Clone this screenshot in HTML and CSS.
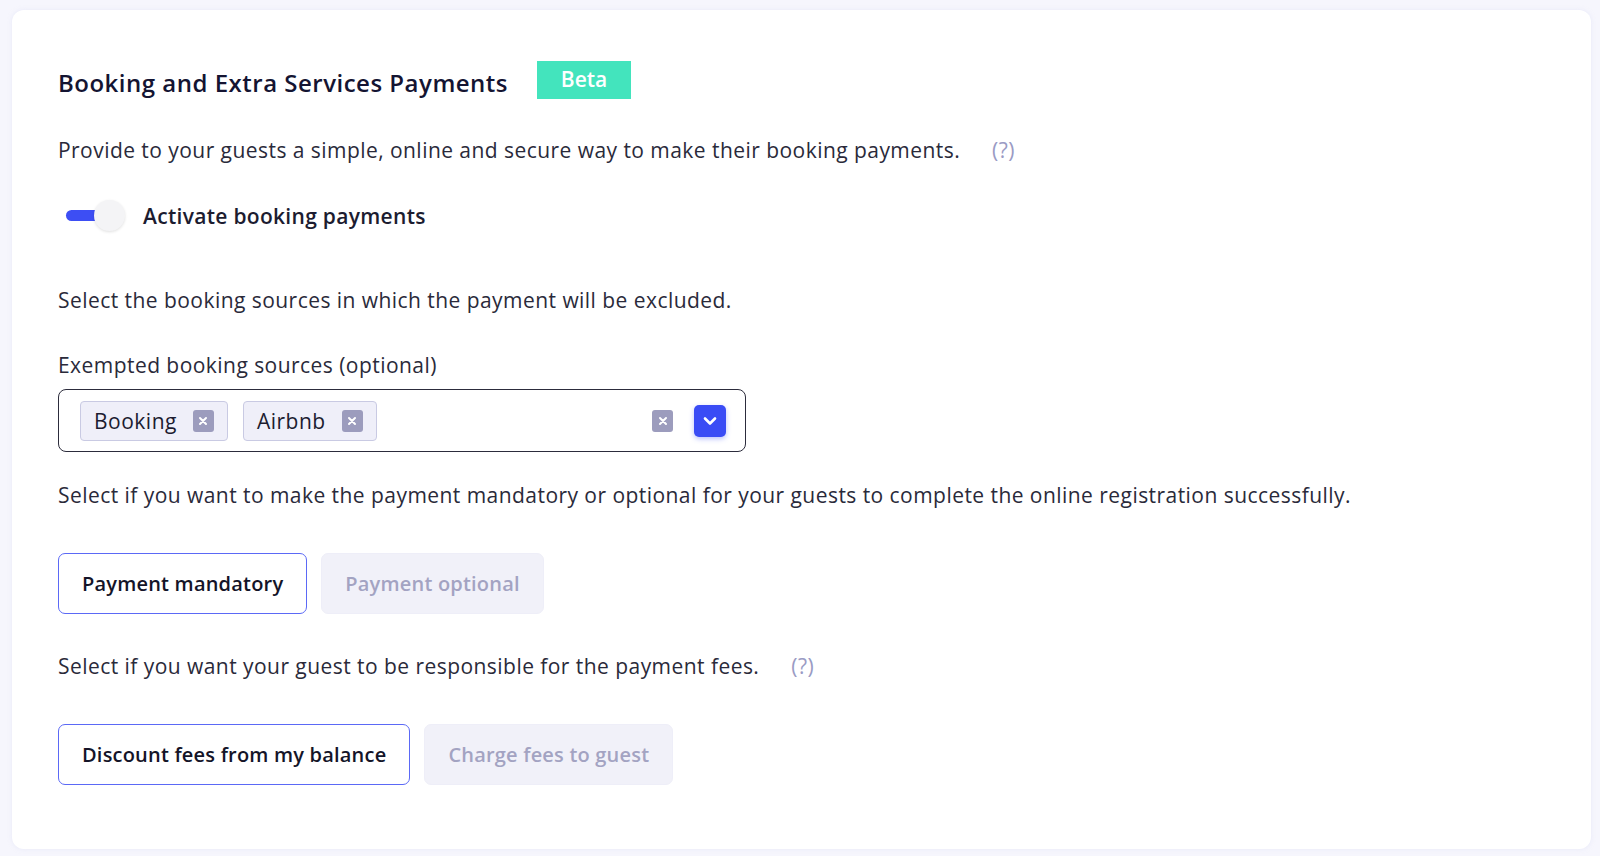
FILE: index.html
```html
<!DOCTYPE html>
<html>
<head>
    <title>Booking Payments</title>
    <link rel="stylesheet" href="styles.css">
</head>
<body>
    <div class="card">
        <div class="header">
            <h1 class="title">Booking and Extra Services Payments</h1>
            <span class="beta">Beta</span>
        </div>

        <p class="text first">Provide to your guests a simple, online and secure way to make their booking payments. <span class="help">(?)</span></p>

        <div class="toggle-row">
            <div class="toggle">
                <div class="track"></div>
                <div class="knob"></div>
            </div>
            <span class="toggle-label">Activate booking payments</span>
        </div>

        <p class="text sources">Select the booking sources in which the payment will be excluded.</p>

        <p class="text label">Exempted booking sources (optional)</p>
        <div class="select">
            <div class="chips">
                <span class="chip">Booking
                    <span class="chip-x"><svg width="10" height="10" viewBox="0 0 10 10"><path d="M2 2 L8 8 M8 2 L2 8" stroke="#fff" stroke-width="2" stroke-linecap="round"/></svg></span>
                </span>
                <span class="chip">Airbnb
                    <span class="chip-x"><svg width="10" height="10" viewBox="0 0 10 10"><path d="M2 2 L8 8 M8 2 L2 8" stroke="#fff" stroke-width="2" stroke-linecap="round"/></svg></span>
                </span>
            </div>
            <span class="clear"><svg width="10" height="10" viewBox="0 0 10 10"><path d="M2 2 L8 8 M8 2 L2 8" stroke="#fff" stroke-width="2" stroke-linecap="round"/></svg></span>
            <span class="arrow"><svg width="16" height="12" viewBox="0 0 16 12"><path d="M3 3.5 L8 8.5 L13 3.5" fill="none" stroke="#fff" stroke-width="2.6" stroke-linecap="round" stroke-linejoin="round"/></svg></span>
        </div>

        <p class="text mandatory">Select if you want to make the payment mandatory or optional for your guests to complete the online registration successfully.</p>
        <div class="options">
            <button class="option active">Payment mandatory</button>
            <button class="option">Payment optional</button>
        </div>

        <p class="text fees">Select if you want your guest to be responsible for the payment fees. <span class="help">(?)</span></p>
        <div class="options">
            <button class="option active">Discount fees from my balance</button>
            <button class="option">Charge fees to guest</button>
        </div>
    </div>
</body>
</html>
```

FILE: styles.css
```css
html, body {
    margin: 0;
    padding: 0;
}

body {
    background-color: #f6f6fd;
    font-family: "Open Sans", "Noto Sans", sans-serif;
    color: #16162b;
    padding: 10px 9px 7px 12px;
}

.card {
    background-color: #fff;
    border-radius: 12px;
    padding: 51px 46px 64px 46px;
    box-shadow: 0 0 4px rgba(220, 222, 245, 0.5);
}

.header {
    display: flex;
    align-items: center;
    height: 38px;
}

.title {
    margin: 5px 0 0 0;
    font-size: 24px;
    font-weight: 600;
    letter-spacing: 0.5px;
    color: #141432;
}

.beta {
    margin-left: 29px;
    width: 94px;
    height: 38px;
    line-height: 37px;
    text-align: center;
    background-color: #43e4bd;
    color: #fff;
    font-size: 21px;
    font-weight: 600;
}

.text {
    margin: 0;
    font-size: 21px;
    line-height: 24px;
    letter-spacing: 0.45px;
    color: #2a2a3a;
}

.help {
    margin-left: 26px;
    color: #9a9bc4;
}

.first { margin-top: 39px; }
.sources { margin-top: 57px; }
.label { margin-top: 41px; }
.mandatory { margin-top: 31px; }
.fees { margin-top: 40px; }

.toggle-row {
    display: flex;
    align-items: center;
    margin-top: 38px;
    height: 31px;
}

.toggle {
    position: relative;
    width: 62px;
    height: 31px;
    margin-left: 8px;
}

.track {
    position: absolute;
    left: 0;
    top: 10px;
    width: 40px;
    height: 11px;
    border-radius: 6px;
    background-color: #3d4ef4;
}

.knob {
    position: absolute;
    left: 28px;
    top: 0;
    width: 31px;
    height: 31px;
    border-radius: 50%;
    background-color: #f4f4f6;
    box-shadow: 0 1px 3px rgba(0, 0, 0, 0.12);
}

.toggle-label {
    margin-left: 15px;
    font-size: 21px;
    font-weight: 600;
    letter-spacing: 0.3px;
    color: #1c1c30;
}

.select {
    display: flex;
    align-items: center;
    width: 688px;
    margin-top: 12px;
    border: 1px solid #2c2c3c;
    border-radius: 8px;
    padding: 0 19px 0 21px;
    box-sizing: border-box;
    height: 63px;
}

.chips {
    display: flex;
    gap: 15px;
    flex: 1;
}

.chip {
    display: flex;
    align-items: center;
    height: 40px;
    padding: 0 13px 0 13px;
    box-sizing: border-box;
    background-color: #efeff9;
    border: 1px solid #c9cae3;
    border-radius: 4px;
    font-size: 21px;
    letter-spacing: 0.5px;
    color: #1c1c30;
}

.chip-x, .clear {
    display: flex;
    align-items: center;
    justify-content: center;
    width: 21px;
    height: 22px;
    border-radius: 3px;
    background-color: #9c9cbd;
    margin-left: 16px;
}

.clear {
    margin-left: 0;
}

.arrow {
    display: flex;
    align-items: center;
    justify-content: center;
    width: 32px;
    height: 32px;
    margin-left: 21px;
    border-radius: 5px;
    background-color: #3a4cf5;
    box-shadow: 0 2px 5px rgba(58, 76, 245, 0.35);
}

.options {
    display: flex;
    gap: 14px;
    margin-top: 46px;
}

.option {
    height: 61px;
    padding: 0 23px;
    border: 1px solid #eeeef8;
    border-radius: 7px;
    background-color: #f1f1f9;
    color: #a3a3c2;
    font-family: "Open Sans", "Noto Sans", sans-serif;
    font-size: 20px;
    font-weight: 600;
    letter-spacing: 0.2px;
}

.option.active {
    background-color: #fff;
    border-color: #5b69f6;
    color: #141428;
}
```
